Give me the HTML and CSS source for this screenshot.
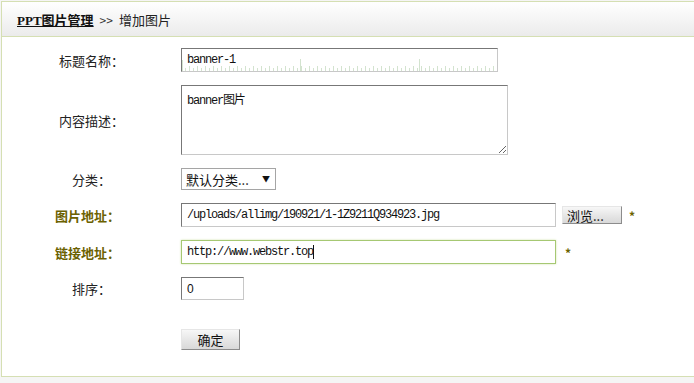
FILE: index.html
```html
<!DOCTYPE html>
<html lang="zh-CN">
<head>
  <meta charset="UTF-8" />
  <title>增加图片</title>
  <link rel="stylesheet" href="styles.css">
</head>
<body>
  <div class="panel">
    <div class="panel-head">
      <a href="#" class="crumb">PPT图片管理</a>
      <span class="sep">&gt;&gt;</span>
      <span class="cur">增加图片</span>
    </div>

    <form class="form">
      <div class="row">
        <label>标题名称：</label>
        <div class="field"><input type="text" class="txt txt-title" value="banner-1" /></div>
      </div>
      <div class="row">
        <label>内容描述：</label>
        <div class="field"><textarea class="txt txt-area">banner图片</textarea></div>
      </div>
      <div class="row">
        <label>分类：</label>
        <div class="field">
          <div class="select-wrap">
            <select class="sel"><option>默认分类...</option></select>
          </div>
        </div>
      </div>
      <div class="row">
        <label class="must">图片地址：</label>
        <div class="field">
          <input type="text" class="txt txt-long" value="/uploads/allimg/190921/1-1Z9211Q934923.jpg" />
          <button type="button" class="btn btn-browse">浏览...</button>
          <span class="star star-browse">*</span>
        </div>
      </div>
      <div class="row">
        <label class="must">链接地址：</label>
        <div class="field">
          <div class="focus-wrap">
            <input type="text" class="txt txt-long txt-focus" value="http://www.webstr.top" />
            <span class="caret"></span>
          </div>
          <span class="star star-link">*</span>
        </div>
      </div>
      <div class="row">
        <label>排序：</label>
        <div class="field"><input type="text" class="txt txt-short" value="0" /></div>
      </div>
      <div class="row row-submit">
        <span></span>
        <div class="field"><button type="button" class="btn btn-ok">确定</button></div>
      </div>
    </form>
  </div>
</body>
</html>
```

FILE: styles.css
```css
* { box-sizing: border-box; }
html, body { margin: 0; padding: 0; overflow: hidden; }
body {
  background: #f5f5f5;
  font-family: "Noto Sans CJK SC", "Liberation Sans", sans-serif;
  font-size: 13px;
  color: #222;
  height: 383px;
}
.panel {
  margin: 1px -4px 0 1px;
  border: 1px solid #d5dfb3;
  background: #fff;
}
.panel-head {
  height: 35px;
  padding: 0 0 0 15px;
  display: flex;
  align-items: center;
  gap: 6px;
  font-size: 13px;
  background: linear-gradient(#fff, #ebebeb);
  border-bottom: 1px solid #d5dfb3;
}
.panel-head .crumb {
  color: #111;
  font-weight: bold;
  font-family: "Liberation Serif", "Noto Sans CJK SC", serif;
  text-decoration: underline;
}
.panel-head .sep { color: #333; font-size: 12px; }
.panel-head .cur { color: #222; }

.form {
  display: flex;
  flex-direction: column;
  gap: 13px;
  padding: 11px 0 26px;
}
.row {
  display: grid;
  grid-template-columns: 179px 1fr;
  align-items: center;
}
.row label { text-align: center; color: #222; }
.row label.must { color: #6b6100; font-weight: bold; padding-right: 8px; }
.field { display: flex; align-items: center; }

.txt {
  font-family: "Liberation Mono", "Noto Sans CJK SC", monospace;
  font-size: 12px;
  letter-spacing: -1.2px;
  color: #111;
  padding: 0 5px;
  border: 1px solid #c8c8c8;
  border-top-color: #777;
  border-left-color: #777;
  background: #fff;
  outline: none;
}
.txt-title {
  width: 317px;
  height: 24px;
  background:
    linear-gradient(90deg, #d3e3cf 1px, transparent 1px) 0 100% / 119px 11px no-repeat,
    repeating-linear-gradient(90deg, transparent 0 118px, #d3e3cf 118px 119px) 0 100% / 100% 12px no-repeat,
    repeating-linear-gradient(90deg, transparent 0 7px, #d3e3cf 7px 8px) 0 100% / 100% 5px no-repeat,
    repeating-linear-gradient(90deg, transparent 0 3px, #d3e3cf 3px 4px) 0 100% / 100% 3px no-repeat,
    #fff;
}
.txt-area {
  width: 327px;
  height: 70px;
  padding: 4px 5px;
  resize: both;
}
.txt-long { width: 375px; height: 24px; }
.focus-wrap { position: relative; }
.txt-focus {
  display: block;
  border: 1px solid #a6c873;
  box-shadow: 0 0 2px #cfe3ac;
}
.caret {
  position: absolute;
  left: 132px;
  top: 5px;
  width: 1px;
  height: 14px;
  background: #111;
}
.txt-short { width: 63px; height: 23px; font-family: "Liberation Sans", sans-serif; letter-spacing: 0; }

.select-wrap { position: relative; width: 95px; height: 22px; }
.select-wrap::after {
  content: "\25BC";
  position: absolute;
  right: 6px;
  top: 5px;
  font-size: 8px;
  color: #111;
  pointer-events: none;
}
.sel {
  appearance: none;
  -webkit-appearance: none;
  width: 95px;
  height: 22px;
  padding: 0 4px;
  border: 1px solid #a5a5a5;
  background: #fff;
  font-family: "Noto Sans CJK SC", sans-serif;
  font-size: 13px;
  color: #111;
  outline: none;
}

.btn {
  font-family: "Noto Sans CJK SC", sans-serif;
  font-size: 13px;
  color: #111;
  border: 1px solid #e6e6e6;
  border-right-color: #8c8c8c;
  border-bottom-color: #8c8c8c;
  background: linear-gradient(#f7f7f7, #e4e4e4 60%, #d9d9d9);
  padding: 0;
  line-height: 1;
}
.btn-browse { width: 60px; height: 18px; margin-left: 6px; text-align: left; padding-left: 4px; }
.btn-ok { width: 59px; height: 21px; }
.row-submit { margin-top: 16px; }

.star { color: #6b6100; font-weight: bold; font-size: 12px; }
.star-browse { margin-left: 7px; }
.star-link { margin-left: 9px; }
```
